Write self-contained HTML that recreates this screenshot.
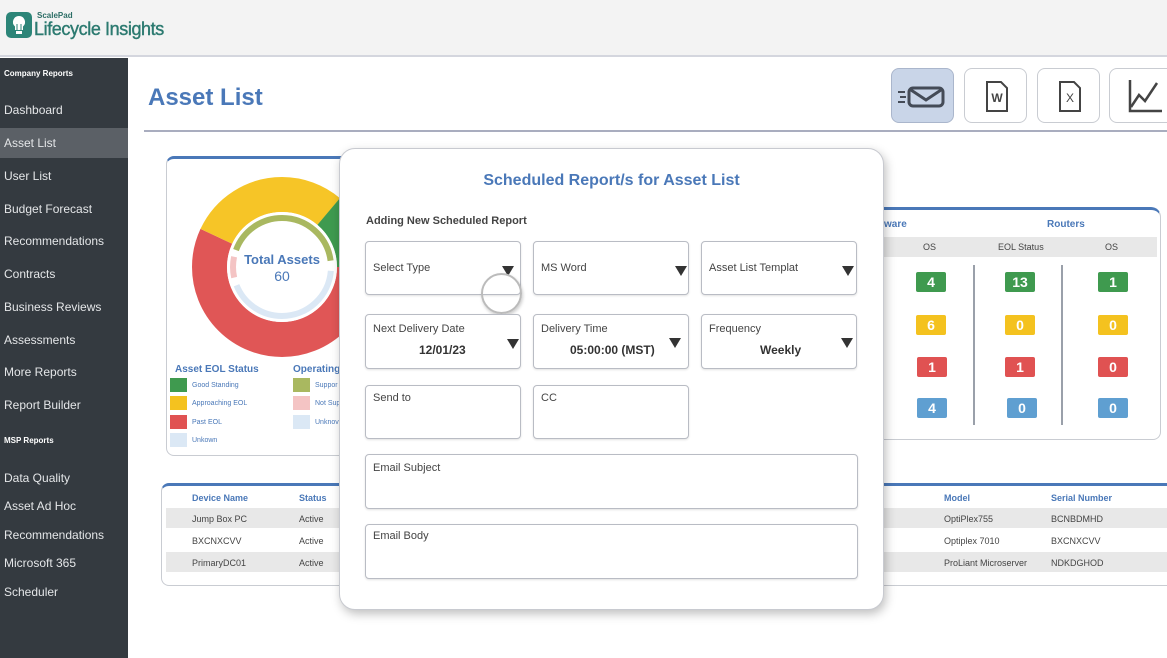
<!DOCTYPE html>
<html><head><meta charset="utf-8"><style>
*{margin:0;padding:0;box-sizing:border-box}
body{width:1167px;height:658px;overflow:hidden;background:#fff;font-family:"Liberation Sans",sans-serif;position:relative}
.a{position:absolute}
.hdr{left:0;top:0;width:1167px;height:57px;background:#f3f3f3;border-bottom:2px solid #d4d6de}
.side{left:0;top:58px;width:128px;height:600px;background:#343a40}
.si{position:absolute;left:4px;color:#e4e6e8;font-size:12px}
.sh{position:absolute;left:4px;color:#fff;font-size:8px;font-weight:bold}
.btn{position:absolute;top:68px;width:63px;height:55px;border:1px solid #c9ccd2;border-radius:8px;background:#fff}
.card{position:absolute;background:#fff;border:1px solid #c9ccd2;border-top:3px solid #4a78b8;border-radius:8px}
.bd{position:absolute;width:30px;height:20px;border-radius:2px;color:#fff;font-size:14px;font-weight:bold;text-align:center;line-height:20px}
.g{background:#3f9a4f}.y{background:#f4c21f}.r{background:#e05252}.b{background:#5f9fd1}
.t{position:absolute;font-size:9px;color:#444}
.th{position:absolute;font-size:9px;color:#4a78b8;font-weight:bold}
.fld{position:absolute;border:1px solid #b9bcc4;border-radius:4px;background:#fff;box-shadow:0 1px 2px rgba(0,0,0,.12)}
.lb{position:absolute;left:7px;font-size:11px;color:#444}
.vl{position:absolute;font-size:12px;font-weight:bold;color:#333}
.arr{position:absolute;width:0;height:0;border-left:6px solid transparent;border-right:6px solid transparent;border-top:10px solid #333}
.lg{position:absolute;width:17px;height:14px}
.lt{position:absolute;font-size:7px;color:#4a78b8}
</style></head><body>
<div class="a hdr"></div>
<svg class="a" style="left:6px;top:12px" width="26" height="26" viewBox="0 0 26 26"><rect x="0" y="0" width="26" height="26" rx="5" fill="#2c8578"/><path d="M13 4a6 6 0 0 0-4 10.5V18h8v-3.5A6 6 0 0 0 13 4z" fill="#fff"/><rect x="10" y="19" width="6" height="3" fill="#fff"/><path d="M11 12v6M15 12v6" stroke="#2c8578" stroke-width="1"/></svg>
<div class="a" style="left:37px;top:11px;font-size:8px;font-weight:bold;color:#2c6e66">ScalePad</div>
<div class="a" style="left:34px;top:19px;font-size:18px;color:#2c7a70;letter-spacing:-0.4px;-webkit-text-stroke:0.4px #2c7a70">Lifecycle Insights</div>

<div class="a side"></div>
<div class="a" style="left:0;top:128px;width:128px;height:30px;background:#5b6066"></div>
<div class="sh" style="top:69px">Company Reports</div>
<div class="si" style="top:103px">Dashboard</div>
<div class="si" style="top:136px">Asset List</div>
<div class="si" style="top:169px">User List</div>
<div class="si" style="top:202px">Budget Forecast</div>
<div class="si" style="top:234px">Recommendations</div>
<div class="si" style="top:267px">Contracts</div>
<div class="si" style="top:300px">Business Reviews</div>
<div class="si" style="top:333px">Assessments</div>
<div class="si" style="top:365px">More Reports</div>
<div class="si" style="top:398px">Report Builder</div>
<div class="sh" style="top:436px">MSP Reports</div>
<div class="si" style="top:471px">Data Quality</div>
<div class="si" style="top:499px">Asset Ad Hoc</div>
<div class="si" style="top:528px">Recommendations</div>
<div class="si" style="top:556px">Microsoft 365</div>
<div class="si" style="top:585px">Scheduler</div>

<div class="a" style="left:148px;top:84px;font-size:24px;font-weight:bold;color:#4a78b8">Asset List</div>
<div class="a" style="left:144px;top:130px;width:1023px;height:2px;background:#a9adbf"></div>

<div class="btn" style="left:891px;background:#c9d5e8;border-color:#aab6cc">
<svg width="63" height="55" viewBox="0 0 63 55"><rect x="17" y="19" width="34" height="18" rx="4" fill="none" stroke="#444b57" stroke-width="3"/><path d="M19 21l15 10 15-10" fill="none" stroke="#444b57" stroke-width="3"/><path d="M6 23h7M8 28h6M6 33h7" stroke="#444b57" stroke-width="2"/></svg></div>
<div class="btn" style="left:964px"><svg width="63" height="55" viewBox="0 0 63 55"><path d="M22 13h14l6 6v23H22z" fill="none" stroke="#444" stroke-width="2"/><text x="32" y="33" font-family="Liberation Sans" font-size="12" font-weight="bold" fill="#444" text-anchor="middle">W</text></svg></div>
<div class="btn" style="left:1037px"><svg width="63" height="55" viewBox="0 0 63 55"><path d="M22 13h14l6 6v23H22z" fill="none" stroke="#444" stroke-width="2"/><text x="32" y="33" font-family="Liberation Sans" font-size="12" fill="#444" text-anchor="middle">X</text></svg></div>
<div class="btn" style="left:1109px;width:70px"><svg width="63" height="55" viewBox="0 0 63 55"><path d="M20 11v31h32" fill="none" stroke="#444" stroke-width="2.5"/><path d="M21 38l8-12 6 6 12-18" fill="none" stroke="#444" stroke-width="2.5"/></svg></div>

<div class="card" style="left:166px;top:156px;width:200px;height:300px"></div>
<svg class="a" style="left:182px;top:167px" width="200" height="200" viewBox="0 0 200 200">
<g transform="translate(100,100)">
<circle r="72.5" fill="none" stroke="#e05656" stroke-width="35" stroke-dasharray="259.4 455.5" stroke-dashoffset="0"/>
<circle r="72.5" fill="none" stroke="#f6c527" stroke-width="35" stroke-dasharray="132.9 455.5" stroke-dashoffset="-259.4"/>
<circle r="72.5" fill="none" stroke="#3f9a4f" stroke-width="35" stroke-dasharray="63.3 455.5" stroke-dashoffset="-392.2"/>
<circle r="55" fill="#fff"/>
<circle r="49" fill="none" stroke="#a9b860" stroke-width="6" stroke-dasharray="130 308" stroke-dashoffset="-171"/>
<circle r="49" fill="none" stroke="#dbe8f5" stroke-width="6" stroke-dasharray="131 308" stroke-dashoffset="-4"/>
<circle r="49" fill="none" stroke="#f4c4c4" stroke-width="6" stroke-dasharray="21 308" stroke-dashoffset="-143"/>
<text x="0" y="-3" font-family="Liberation Sans" font-size="13" font-weight="bold" fill="#4a78b8" text-anchor="middle">Total Assets</text>
<text x="0" y="14" font-family="Liberation Sans" font-size="14" fill="#4a78b8" text-anchor="middle">60</text>
</g></svg>
<div class="th" style="left:175px;top:364px;font-size:10px">Asset EOL Status</div>
<div class="th" style="left:293px;top:364px;font-size:10px">Operating</div>
<div class="lg g" style="left:170px;top:378px"></div><div class="lt" style="left:192px;top:382px">Good Standing</div>
<div class="lg y" style="left:170px;top:396px"></div><div class="lt" style="left:192px;top:400px">Approaching EOL</div>
<div class="lg r" style="left:170px;top:415px"></div><div class="lt" style="left:192px;top:419px">Past EOL</div>
<div class="lg" style="left:170px;top:433px;background:#dbe8f5"></div><div class="lt" style="left:192px;top:437px">Unkown</div>
<div class="lg" style="left:293px;top:378px;background:#a9b860"></div><div class="lt" style="left:315px;top:382px">Suppor</div>
<div class="lg" style="left:293px;top:396px;background:#f4c4c4"></div><div class="lt" style="left:315px;top:400px">Not Sup</div>
<div class="lg" style="left:293px;top:415px;background:#dbe8f5"></div><div class="lt" style="left:315px;top:419px">Unknov</div>

<div class="card" style="left:700px;top:207px;width:461px;height:233px;border-radius:0 10px 8px 8px"></div>
<div class="th" style="left:884px;top:219px;font-size:10px">ware</div>
<div class="th" style="left:1047px;top:219px;font-size:10px">Routers</div>
<div class="a" style="left:884px;top:237px;width:273px;height:20px;background:#e8e8e8"></div>
<div class="t" style="left:923px;top:242px">OS</div>
<div class="t" style="left:998px;top:242px">EOL Status</div>
<div class="t" style="left:1105px;top:242px">OS</div>
<div class="a" style="left:973px;top:265px;width:2px;height:160px;background:#9aa0aa"></div>
<div class="a" style="left:1061px;top:265px;width:2px;height:160px;background:#9aa0aa"></div>
<div class="bd g" style="left:916px;top:272px">4</div><div class="bd g" style="left:1005px;top:272px">13</div><div class="bd g" style="left:1098px;top:272px">1</div>
<div class="bd y" style="left:916px;top:315px">6</div><div class="bd y" style="left:1005px;top:315px">0</div><div class="bd y" style="left:1098px;top:315px">0</div>
<div class="bd r" style="left:917px;top:357px">1</div><div class="bd r" style="left:1005px;top:357px">1</div><div class="bd r" style="left:1098px;top:357px">0</div>
<div class="bd b" style="left:917px;top:398px">4</div><div class="bd b" style="left:1007px;top:398px">0</div><div class="bd b" style="left:1098px;top:398px">0</div>

<div class="card" style="left:161px;top:483px;width:1020px;height:103px"></div>
<div class="a" style="left:166px;top:508px;width:1001px;height:20px;background:#e8e8e8"></div>
<div class="a" style="left:166px;top:552px;width:1001px;height:20px;background:#e8e8e8"></div>
<div class="th" style="left:192px;top:493px">Device Name</div><div class="th" style="left:299px;top:493px">Status</div>
<div class="th" style="left:944px;top:493px">Model</div><div class="th" style="left:1051px;top:493px">Serial Number</div>
<div class="t" style="left:192px;top:514px">Jump Box PC</div><div class="t" style="left:299px;top:514px">Active</div>
<div class="t" style="left:192px;top:536px">BXCNXCVV</div><div class="t" style="left:299px;top:536px">Active</div>
<div class="t" style="left:192px;top:558px">PrimaryDC01</div><div class="t" style="left:299px;top:558px">Active</div>
<div class="t" style="left:944px;top:514px">OptiPlex755</div><div class="t" style="left:1051px;top:514px">BCNBDMHD</div>
<div class="t" style="left:944px;top:536px">Optiplex 7010</div><div class="t" style="left:1051px;top:536px">BXCNXCVV</div>
<div class="t" style="left:944px;top:558px">ProLiant Microserver</div><div class="t" style="left:1051px;top:558px">NDKDGHOD</div>

<div class="a" style="left:339px;top:148px;width:545px;height:462px;background:#fff;border:1px solid #c8cad0;border-radius:16px;box-shadow:2px 4px 10px rgba(0,0,0,.25)"></div>
<div class="a" style="left:339px;top:172px;width:545px;text-align:center;font-size:16px;font-weight:bold;color:#4a78b8">Scheduled Report/s for Asset List</div>
<div class="a" style="left:366px;top:215px;font-size:11px;font-weight:bold;color:#444">Adding New Scheduled Report</div>

<div class="fld" style="left:365px;top:241px;width:156px;height:54px"><div class="lb" style="top:20px">Select Type</div><div class="arr" style="left:136px;top:24px"></div></div>
<div class="fld" style="left:533px;top:241px;width:156px;height:54px"><div class="lb" style="top:20px">MS Word</div><div class="arr" style="left:141px;top:24px"></div></div>
<div class="fld" style="left:701px;top:241px;width:156px;height:54px"><div class="lb" style="top:20px">Asset List Templat</div><div class="arr" style="left:140px;top:24px"></div></div>
<div class="a" style="left:481px;top:273px;width:41px;height:41px;border-radius:50%;border:2px solid #bbb;box-shadow:1px 2px 3px rgba(0,0,0,.2)"></div>

<div class="fld" style="left:365px;top:314px;width:156px;height:55px"><div class="lb" style="top:8px">Next Delivery Date</div><div class="vl" style="left:53px;top:28px">12/01/23</div><div class="arr" style="left:141px;top:24px"></div></div>
<div class="fld" style="left:533px;top:314px;width:156px;height:55px"><div class="lb" style="top:8px">Delivery Time</div><div class="vl" style="left:36px;top:28px">05:00:00 (MST)</div><div class="arr" style="left:135px;top:23px"></div></div>
<div class="fld" style="left:701px;top:314px;width:156px;height:55px"><div class="lb" style="top:8px">Frequency</div><div class="vl" style="left:58px;top:28px">Weekly</div><div class="arr" style="left:139px;top:23px"></div></div>

<div class="fld" style="left:365px;top:385px;width:156px;height:54px"><div class="lb" style="top:6px">Send to</div></div>
<div class="fld" style="left:533px;top:385px;width:156px;height:54px"><div class="lb" style="top:6px">CC</div></div>
<div class="fld" style="left:365px;top:454px;width:493px;height:55px"><div class="lb" style="top:7px">Email Subject</div></div>
<div class="fld" style="left:365px;top:524px;width:493px;height:55px"><div class="lb" style="top:5px">Email Body</div></div>
</body></html>
